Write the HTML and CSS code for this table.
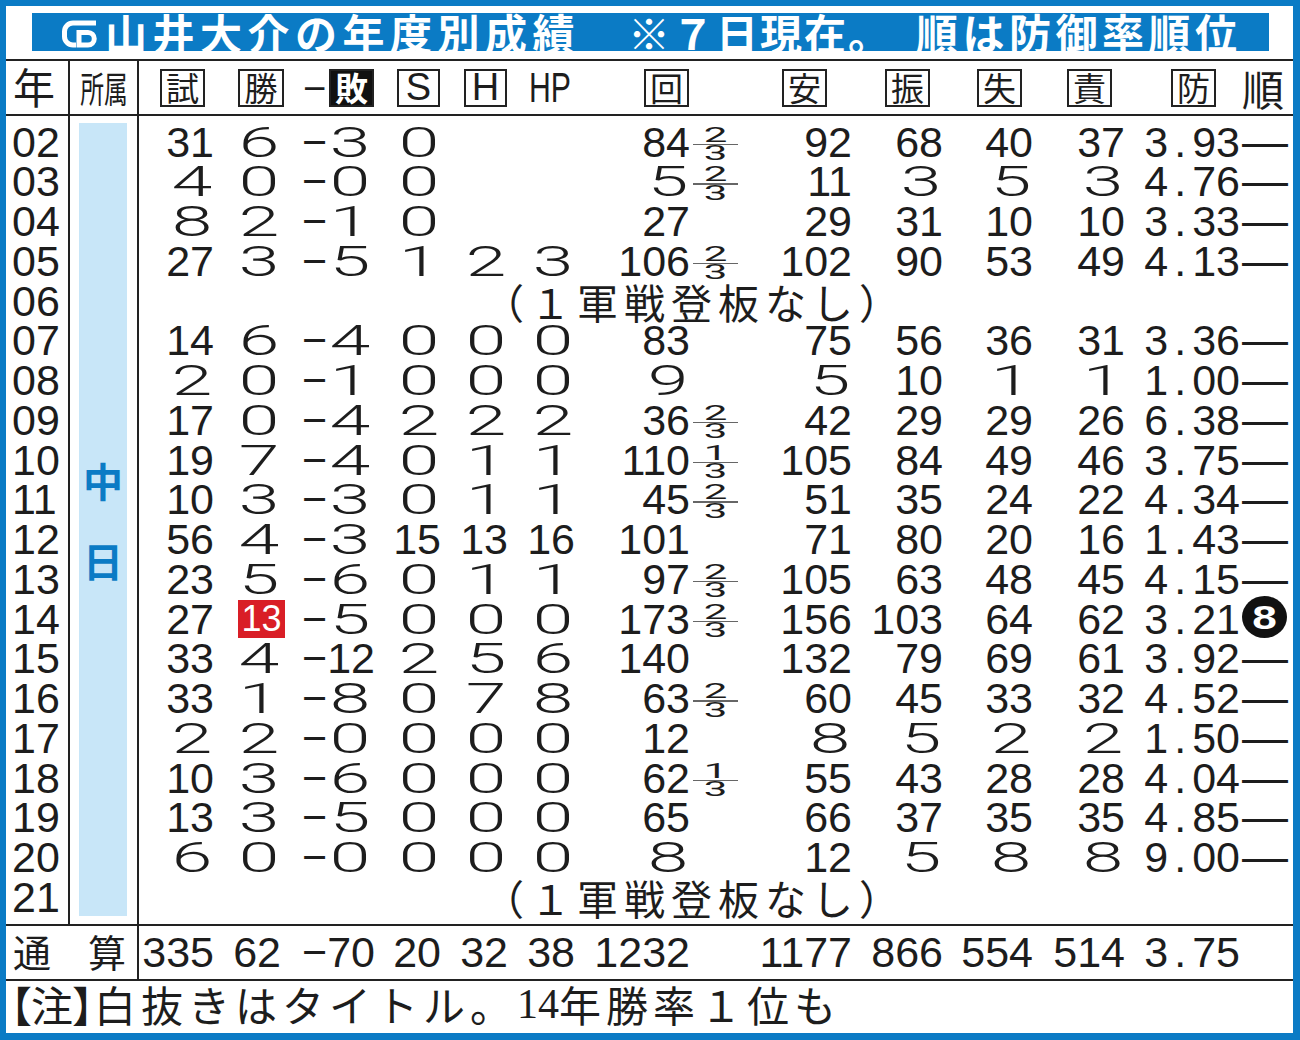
FILE: index.html
```html
<!DOCTYPE html>
<html lang="ja">
<head>
<meta charset="utf-8">
<title>山井大介の年度別成績</title>
<link rel="stylesheet" href="styles.css">
</head>
<body>
<div class="frame">
  <div class="title-row">
    <div class="title-bar">
      <svg class="logo" viewBox="0 0 36 28" aria-label="CD">
        <path d="M34 3 H11 A8.5 8.5 0 0 0 2.5 11.5 V16.5 A8.5 8.5 0 0 0 11 25 H14" fill="none" stroke="#fff" stroke-width="5"/>
        <path d="M17 12.5 H26 A6.25 6.25 0 0 1 32.25 18.75 A6.25 6.25 0 0 1 26 25 H17 Z" fill="none" stroke="#fff" stroke-width="5"/>
      </svg>
      <span class="t1">山井大介の年度別成績</span>
      <span class="t2">※７日現在。</span>
      <span class="t3">順は防御率順位</span>
    </div>
  </div>

  <div class="hdr">
    <div class="c-year"><span class="h-year">年</span></div>
    <div class="c-team"><span class="h-team">所属</span></div>
    <div class="c-num">
      <span class="box b-shi">試</span>
      <span class="box b-sho">勝</span>
      <span class="h-mn">−</span><span class="box inv">敗</span>
      <span class="box lat b-s">S</span>
      <span class="box lat b-h">H</span>
      <span class="h-hp">HP</span>
      <span class="box b-kai">回</span>
      <span class="box b-an">安</span>
      <span class="box b-shin">振</span>
      <span class="box b-shitsu">失</span>
      <span class="box b-seki">責</span>
      <span class="box b-bo">防</span>
      <span class="h-jun">順</span>
    </div>
  </div>

  <div class="body">
    <div class="years">
      <div class="yr">02</div><div class="yr">03</div><div class="yr">04</div><div class="yr">05</div>
      <div class="yr">06</div><div class="yr">07</div><div class="yr">08</div><div class="yr">09</div>
      <div class="yr">10</div><div class="yr">11</div><div class="yr">12</div><div class="yr">13</div>
      <div class="yr">14</div><div class="yr">15</div><div class="yr">16</div><div class="yr">17</div>
      <div class="yr">18</div><div class="yr">19</div><div class="yr">20</div><div class="yr">21</div>
    </div>
    <div class="team">
      <div class="strip"><span>中</span><span>日</span></div>
    </div>
    <div class="data">
      <div class="r"><span>31</span><span><span class="w">6</span></span><span class="lose"><span class="mn">−</span><span class="w">3</span></span><span><span class="w">0</span></span><span></span><span></span><span>84</span><span class="frc"><span class="fr"><span class="fn">2</span><span class="fl"></span><span class="fn">3</span></span></span><span>92</span><span>68</span><span>40</span><span>37</span><span>3<span class="pt">.</span>93</span><span class="dash">—</span></div>

      <div class="r"><span><span class="w">4</span></span><span><span class="w">0</span></span><span class="lose"><span class="mn">−</span><span class="w">0</span></span><span><span class="w">0</span></span><span></span><span></span><span><span class="w">5</span></span><span class="frc"><span class="fr"><span class="fn">2</span><span class="fl"></span><span class="fn">3</span></span></span><span>11</span><span><span class="w">3</span></span><span><span class="w">5</span></span><span><span class="w">3</span></span><span>4<span class="pt">.</span>76</span><span class="dash">—</span></div>

      <div class="r"><span><span class="w">8</span></span><span><span class="w">2</span></span><span class="lose"><span class="mn">−</span><span class="w">1</span></span><span><span class="w">0</span></span><span></span><span></span><span>27</span><span class="frc"></span><span>29</span><span>31</span><span>10</span><span>10</span><span>3<span class="pt">.</span>33</span><span class="dash">—</span></div>

      <div class="r"><span>27</span><span><span class="w">3</span></span><span class="lose"><span class="mn">−</span><span class="w">5</span></span><span><span class="w">1</span></span><span><span class="w">2</span></span><span><span class="w">3</span></span><span>106</span><span class="frc"><span class="fr"><span class="fn">2</span><span class="fl"></span><span class="fn">3</span></span></span><span>102</span><span>90</span><span>53</span><span>49</span><span>4<span class="pt">.</span>13</span><span class="dash">—</span></div>

      <div class="r"><span class="none">（１軍戦登板なし）</span></div>

      <div class="r"><span>14</span><span><span class="w">6</span></span><span class="lose"><span class="mn">−</span><span class="w">4</span></span><span><span class="w">0</span></span><span><span class="w">0</span></span><span><span class="w">0</span></span><span>83</span><span class="frc"></span><span>75</span><span>56</span><span>36</span><span>31</span><span>3<span class="pt">.</span>36</span><span class="dash">—</span></div>

      <div class="r"><span><span class="w">2</span></span><span><span class="w">0</span></span><span class="lose"><span class="mn">−</span><span class="w">1</span></span><span><span class="w">0</span></span><span><span class="w">0</span></span><span><span class="w">0</span></span><span><span class="w">9</span></span><span class="frc"></span><span><span class="w">5</span></span><span>10</span><span><span class="w">1</span></span><span><span class="w">1</span></span><span>1<span class="pt">.</span>00</span><span class="dash">—</span></div>

      <div class="r"><span>17</span><span><span class="w">0</span></span><span class="lose"><span class="mn">−</span><span class="w">4</span></span><span><span class="w">2</span></span><span><span class="w">2</span></span><span><span class="w">2</span></span><span>36</span><span class="frc"><span class="fr"><span class="fn">2</span><span class="fl"></span><span class="fn">3</span></span></span><span>42</span><span>29</span><span>29</span><span>26</span><span>6<span class="pt">.</span>38</span><span class="dash">—</span></div>

      <div class="r"><span>19</span><span><span class="w">7</span></span><span class="lose"><span class="mn">−</span><span class="w">4</span></span><span><span class="w">0</span></span><span><span class="w">1</span></span><span><span class="w">1</span></span><span>110</span><span class="frc"><span class="fr"><span class="fn">1</span><span class="fl"></span><span class="fn">3</span></span></span><span>105</span><span>84</span><span>49</span><span>46</span><span>3<span class="pt">.</span>75</span><span class="dash">—</span></div>

      <div class="r"><span>10</span><span><span class="w">3</span></span><span class="lose"><span class="mn">−</span><span class="w">3</span></span><span><span class="w">0</span></span><span><span class="w">1</span></span><span><span class="w">1</span></span><span>45</span><span class="frc"><span class="fr"><span class="fn">2</span><span class="fl"></span><span class="fn">3</span></span></span><span>51</span><span>35</span><span>24</span><span>22</span><span>4<span class="pt">.</span>34</span><span class="dash">—</span></div>

      <div class="r"><span>56</span><span><span class="w">4</span></span><span class="lose"><span class="mn">−</span><span class="w">3</span></span><span>15</span><span>13</span><span>16</span><span>101</span><span class="frc"></span><span>71</span><span>80</span><span>20</span><span>16</span><span>1<span class="pt">.</span>43</span><span class="dash">—</span></div>

      <div class="r"><span>23</span><span><span class="w">5</span></span><span class="lose"><span class="mn">−</span><span class="w">6</span></span><span><span class="w">0</span></span><span><span class="w">1</span></span><span><span class="w">1</span></span><span>97</span><span class="frc"><span class="fr"><span class="fn">2</span><span class="fl"></span><span class="fn">3</span></span></span><span>105</span><span>63</span><span>48</span><span>45</span><span>4<span class="pt">.</span>15</span><span class="dash">—</span></div>

      <div class="r"><span>27</span><span><span class="badge">13</span></span><span class="lose"><span class="mn">−</span><span class="w">5</span></span><span><span class="w">0</span></span><span><span class="w">0</span></span><span><span class="w">0</span></span><span>173</span><span class="frc"><span class="fr"><span class="fn">2</span><span class="fl"></span><span class="fn">3</span></span></span><span>156</span><span>103</span><span>64</span><span>62</span><span>3<span class="pt">.</span>21</span><span class="rk"><span class="rk8"><span>8</span></span></span></div>

      <div class="r"><span>33</span><span><span class="w">4</span></span><span class="lose"><span class="mn">−</span><span>12</span></span><span><span class="w">2</span></span><span><span class="w">5</span></span><span><span class="w">6</span></span><span>140</span><span class="frc"></span><span>132</span><span>79</span><span>69</span><span>61</span><span>3<span class="pt">.</span>92</span><span class="dash">—</span></div>

      <div class="r"><span>33</span><span><span class="w">1</span></span><span class="lose"><span class="mn">−</span><span class="w">8</span></span><span><span class="w">0</span></span><span><span class="w">7</span></span><span><span class="w">8</span></span><span>63</span><span class="frc"><span class="fr"><span class="fn">2</span><span class="fl"></span><span class="fn">3</span></span></span><span>60</span><span>45</span><span>33</span><span>32</span><span>4<span class="pt">.</span>52</span><span class="dash">—</span></div>

      <div class="r"><span><span class="w">2</span></span><span><span class="w">2</span></span><span class="lose"><span class="mn">−</span><span class="w">0</span></span><span><span class="w">0</span></span><span><span class="w">0</span></span><span><span class="w">0</span></span><span>12</span><span class="frc"></span><span><span class="w">8</span></span><span><span class="w">5</span></span><span><span class="w">2</span></span><span><span class="w">2</span></span><span>1<span class="pt">.</span>50</span><span class="dash">—</span></div>

      <div class="r"><span>10</span><span><span class="w">3</span></span><span class="lose"><span class="mn">−</span><span class="w">6</span></span><span><span class="w">0</span></span><span><span class="w">0</span></span><span><span class="w">0</span></span><span>62</span><span class="frc"><span class="fr"><span class="fn">1</span><span class="fl"></span><span class="fn">3</span></span></span><span>55</span><span>43</span><span>28</span><span>28</span><span>4<span class="pt">.</span>04</span><span class="dash">—</span></div>

      <div class="r"><span>13</span><span><span class="w">3</span></span><span class="lose"><span class="mn">−</span><span class="w">5</span></span><span><span class="w">0</span></span><span><span class="w">0</span></span><span><span class="w">0</span></span><span>65</span><span class="frc"></span><span>66</span><span>37</span><span>35</span><span>35</span><span>4<span class="pt">.</span>85</span><span class="dash">—</span></div>

      <div class="r"><span><span class="w">6</span></span><span><span class="w">0</span></span><span class="lose"><span class="mn">−</span><span class="w">0</span></span><span><span class="w">0</span></span><span><span class="w">0</span></span><span><span class="w">0</span></span><span><span class="w">8</span></span><span class="frc"></span><span>12</span><span><span class="w">5</span></span><span><span class="w">8</span></span><span><span class="w">8</span></span><span>9<span class="pt">.</span>00</span><span class="dash">—</span></div>

      <div class="r"><span class="none">（１軍戦登板なし）</span></div>
    </div>
  </div>

  <div class="total">
    <div class="tot-label"><span>通</span><span>算</span></div>
    <div class="r tot"><span>335</span><span>62</span><span class="lose"><span class="mn">−</span><span>70</span></span><span>20</span><span>32</span><span>38</span><span>1232</span><span class="frc"></span><span>1177</span><span>866</span><span>554</span><span>514</span><span>3<span class="pt">.</span>75</span><span></span></div>
  </div>

  <div class="note"><span class="br">【注】</span>白抜きはタイトル。<span class="ser">14</span>年勝率１位も</div>
</div>
</body>
</html>
```

FILE: styles.css
```css
* { box-sizing: border-box; margin: 0; padding: 0; }

html, body {
  width: 1300px;
  height: 1040px;
  overflow: hidden;
  background: #fff;
}

body {
  font-family: "Liberation Sans", "Noto Sans CJK JP", sans-serif;
  color: #1d1d1d;
}

.frame {
  width: 1300px;
  height: 1040px;
  border-style: solid;
  border-color: #0b7bc5;
  border-width: 6px 7px 7px 6px;
  display: flex;
  flex-direction: column;
}

/* ---------- title ---------- */
.title-row {
  height: 55px;
  flex: none;
  padding: 7px 0 0 26px;
  border-bottom: 2px solid #222;
}

.title-bar {
  width: 1237px;
  height: 38px;
  background: #0b7bc5;
  display: flex;
  align-items: center;
  color: #fff;
  font-family: "Noto Sans CJK JP", sans-serif;
  font-weight: 700;
  font-size: 42px;
  line-height: 38px;
  white-space: nowrap;
}

.logo { width: 36px; height: 28px; margin: 4px 0 0 30px; flex: none; }
.t1 { margin-left: 7px; letter-spacing: 5.5px; }
.t2 { margin-left: 48px; letter-spacing: 2px; }
.t3 { margin-left: 24px; letter-spacing: 4.5px; }

/* ---------- header ---------- */
.hdr {
  height: 55px;
  flex: none;
  display: flex;
  border-bottom: 2px solid #222;
  font-family: "Noto Sans CJK JP", sans-serif;
}

.c-year {
  width: 64px;
  border-right: 2px solid #222;
  padding: 0 0 3px 7px;
  display: flex;
  align-items: center;
}
.h-year { font-size: 42px; line-height: 1; }

.c-team {
  width: 69px;
  border-right: 2px solid #222;
  display: flex;
  align-items: center;
  justify-content: center;
  padding-bottom: 2px;
  white-space: nowrap;
  overflow: visible;
}
.h-team {
  display: inline-block;
  flex: none;
  font-size: 36px;
  line-height: 1;
  white-space: nowrap;
  transform: scaleX(0.66);
}

.c-num {
  flex: 1;
  display: flex;
  align-items: center;
}

.box {
  width: 45px;
  height: 38px;
  border: 2px solid #222;
  font-size: 33px;
  line-height: 33px;
  text-align: center;
  flex: none;
}
.box.lat {
  width: 43px;
  font-family: "Liberation Sans", sans-serif;
  font-size: 38px;
}
.box.inv {
  background: #111;
  color: #fff;
  font-weight: 700;
}

.b-shi { margin-left: 21px; }
.b-sho { margin-left: 33px; width: 46px; }
.h-mn {
  margin-left: 19px;
  width: 26px;
  font-family: "Liberation Sans", sans-serif;
  font-size: 40px;
  line-height: 1;
}
.b-s { margin-left: 23px; }
.b-h { margin-left: 24px; }
.h-hp {
  margin-left: 22px;
  width: 45px;
  display: inline-block;
  font-family: "Liberation Sans", sans-serif;
  font-size: 42px;
  line-height: 1;
  transform: scaleX(0.72);
  transform-origin: left center;
  white-space: nowrap;
}
.b-kai { margin-left: 70px; }
.b-an { margin-left: 93px; }
.b-shin { margin-left: 58px; }
.b-shitsu { margin-left: 47px; }
.b-seki { margin-left: 45px; }
.b-bo { margin-left: 59px; }
.h-jun { margin-left: 26px; font-size: 42px; line-height: 1; }

/* ---------- body ---------- */
.body {
  height: 810px;
  flex: none;
  display: flex;
  border-bottom: 2px solid #222;
}

.years {
  width: 64px;
  border-right: 2px solid #222;
  padding: 6.5px 0 0 6px;
}
.yr {
  height: 39.75px;
  line-height: 39.75px;
  font-size: 43px;
}

.team {
  width: 69px;
  border-right: 2px solid #222;
  padding: 7px 10px 8px 9px;
}
.strip {
  height: 100%;
  background: #c8e6f8;
  color: #0b7bc5;
  font-family: "Noto Sans CJK JP", sans-serif;
  font-weight: 700;
  font-size: 40px;
  line-height: 40px;
  display: flex;
  flex-direction: column;
  align-items: center;
  justify-content: center;
  gap: 40px;
}

.data {
  flex: 1;
  padding-top: 6.5px;
}

.r {
  display: grid;
  grid-template-columns: 75px 67px 91px 69px 67px 67px 115px 50px 112px 91px 90px 92px 115px 53px;
  height: 39.75px;
  line-height: 39.75px;
  font-size: 43px;
  white-space: nowrap;
}
.r > span { text-align: right; }

.w {
  display: inline-block;
  width: 28px;
  margin-right: 8px;
  text-align: center;
  font-family: "Roboto", "Liberation Sans", sans-serif;
  font-weight: 300;
  transform: scaleX(1.7);
}

.lose {
  display: flex;
  justify-content: space-between;
  padding-left: 21px;
}
.mn { display: inline-block; }

.frc { text-align: left !important; }
.fr {
  display: flex;
  flex-direction: column;
  align-items: center;
  justify-content: center;
  width: 45px;
  height: 39.75px;
  margin-left: 3px;
  padding-top: 4px;
}
.fn {
  display: block;
  font-family: "Roboto", "Liberation Sans", sans-serif;
  font-weight: 400;
  font-size: 20px;
  line-height: 15px;
  height: 15px;
  transform: scaleX(2.1);
}
.fl {
  display: block;
  width: 45px;
  height: 1.5px;
  background: #666;
  margin: 1px 0;
}

.pt {
  display: inline-block;
  width: 0.556em;
  text-align: center;
}

.dash {
  text-align: left !important;
  padding-left: 2px;
  font-size: 46px;
  line-height: 36px;
}

.rk {
  display: flex;
  align-items: center;
  text-align: left !important;
}
.rk8 {
  display: flex;
  align-items: center;
  justify-content: center;
  width: 45px;
  height: 42px;
  margin: -4px 0 0 2px;
  border-radius: 50%;
  background: #111;
  color: #fff;
  font-weight: 700;
  font-size: 34px;
}
.rk8 span { display: inline-block; transform: scaleX(1.3); line-height: 1; }

.badge {
  display: inline-block;
  width: 47px;
  height: 38px;
  margin-right: -4px;
  background: #d91e26;
  color: #fff;
  font-size: 36px;
  line-height: 38px;
  text-align: center;
  vertical-align: top;
}

.none {
  grid-column: 1 / -1;
  text-align: left !important;
  padding-left: 344px;
  font-family: "Noto Sans CJK JP", sans-serif;
  font-size: 41px;
  letter-spacing: 6px;
}

/* ---------- total ---------- */
.total {
  height: 55px;
  flex: none;
  display: flex;
  border-bottom: 2px solid #222;
}
.tot-label {
  width: 133px;
  border-right: 2px solid #222;
  display: flex;
  justify-content: space-between;
  align-items: center;
  padding: 0 11px 4px 7px;
  font-family: "Noto Sans CJK JP", sans-serif;
  font-size: 38px;
  line-height: 1;
}
.r.tot {
  height: 53px;
  line-height: 53px;
}

/* ---------- note ---------- */
.note {
  flex: 1;
  display: flex;
  align-items: center;
  padding: 0 0 7px 4px;
  font-family: "Noto Sans CJK JP", sans-serif;
  font-size: 42px;
  line-height: 1;
  letter-spacing: 5px;
  white-space: nowrap;
}
.br { font-feature-settings: "palt"; letter-spacing: 0; }
.ser { font-family: "Liberation Serif", serif; letter-spacing: 0; }
```
